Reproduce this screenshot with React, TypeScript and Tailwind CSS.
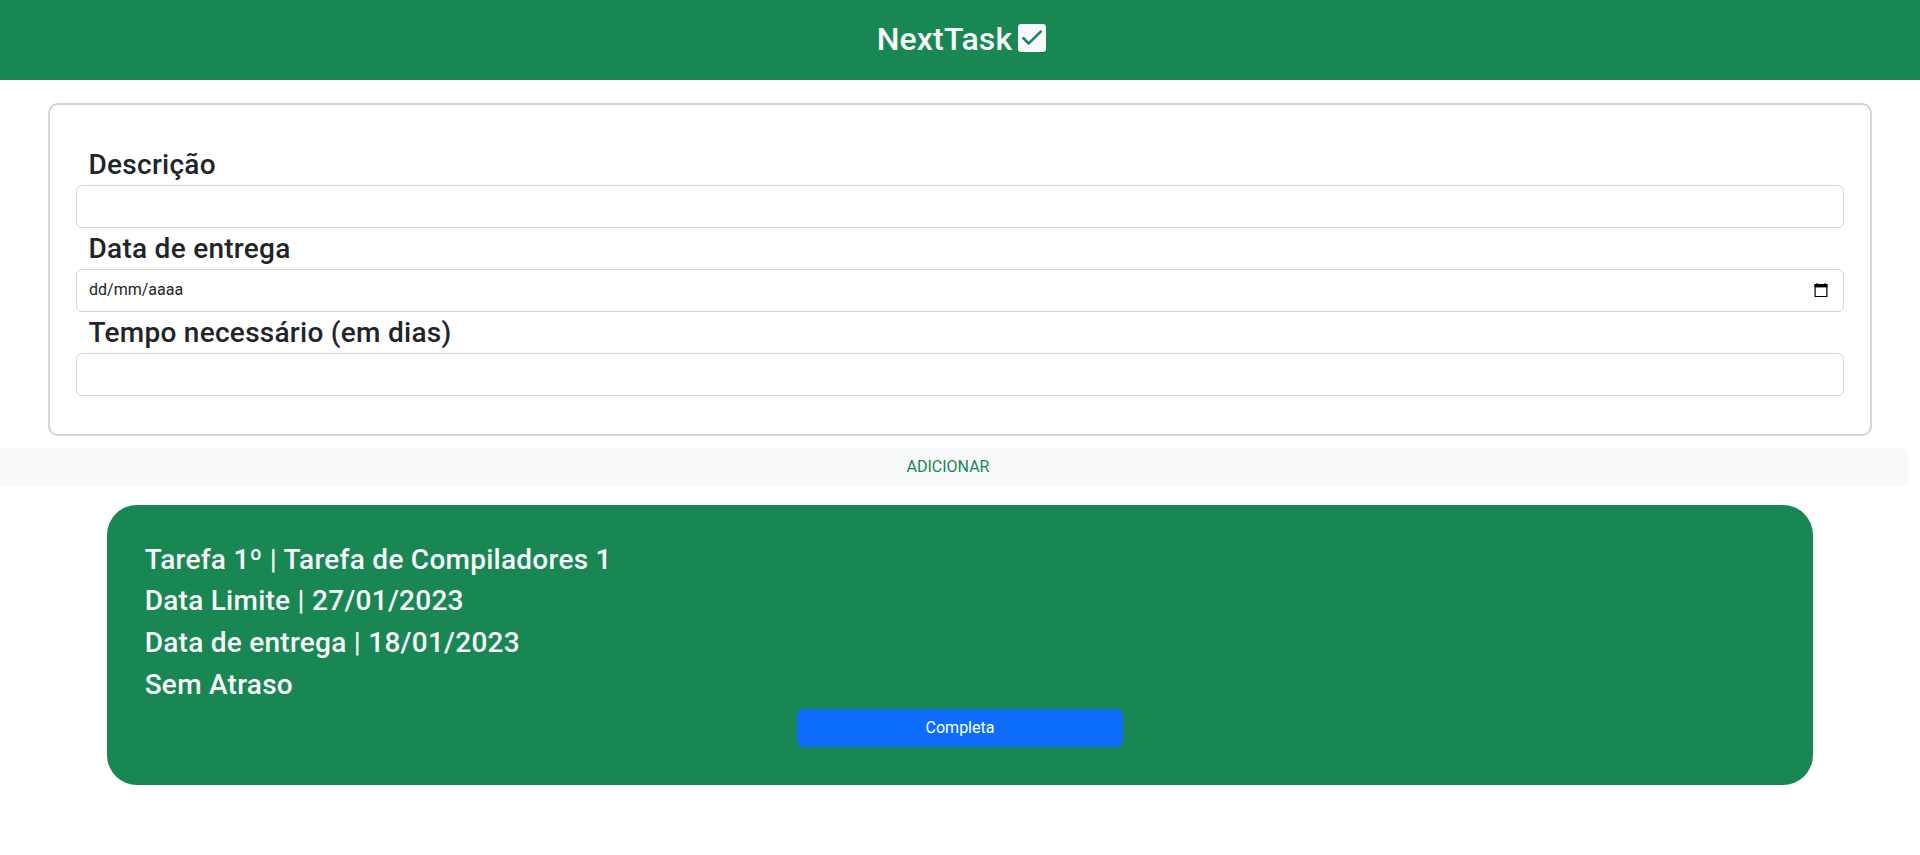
import React from "react";

type FieldProps = { label: string; children?: React.ReactNode };

function Field({ label, children }: FieldProps) {
  return (
    <div className="flex flex-col">
      <label className="flex h-[41px] items-center pl-[12.5px] text-[28px] font-medium leading-[34px] tracking-[0.27px] text-[#212529]">
        {label}
      </label>
      <div className="flex h-[43px] items-center justify-between rounded-md border border-[#ced4da] bg-white px-3 text-base text-[#212529]">
        {children}
      </div>
    </div>
  );
}

function CalendarIcon() {
  return (
    <svg className="mr-[3px] h-[15px] w-[14px]" viewBox="0 0 14 15" fill="none">
      <path d="M3 0.2v2M11 0.2v2" stroke="#000" strokeWidth="1.3" />
      <path d="M1.1 1.6h11.8v11.9H1.1z" stroke="#000" strokeWidth="1.2" strokeLinejoin="round" />
      <path d="M0.6 1h12.8v3.4H0.6z" fill="#000" />
    </svg>
  );
}

function CheckedBox() {
  return (
    <svg className="h-7 w-7" viewBox="0 0 28 28">
      <rect width="28" height="28" rx="3.2" fill="#f8f9fa" />
      <path d="M4.7 13.5l6 6L23.5 6.8" fill="none" stroke="#198754" strokeWidth="2.5" />
    </svg>
  );
}

const taskLines = [
  "Tarefa 1º | Tarefa de Compiladores 1",
  "Data Limite | 27/01/2023",
  "Data de entrega | 18/01/2023",
  "Sem Atraso",
];

export default function App() {
  return (
    <div className="h-[855px] overflow-hidden bg-white font-['Roboto',sans-serif]">
      <header className="flex h-20 items-center justify-center gap-[6px] bg-[#198754] pb-1 pl-[3px]">
        <h1 className="pt-px text-[32px] font-medium leading-10 tracking-[0.15px] text-[#f8f9fa]">NextTask</h1>
        <CheckedBox />
      </header>

      <form className="mx-12 mt-[23px] h-[333px] rounded-[10px] border-2 border-[#d3d3d3] px-[26px] pt-[39px]">
        <Field label="Descrição" />
        <Field label="Data de entrega">
          <span className="pb-[2px]">dd/mm/aaaa</span>
          <CalendarIcon />
        </Field>
        <Field label="Tempo necessário (em dias)" />
      </form>

      <button
        type="button"
        className="-ml-3 mt-3 block h-[38px] w-[1920px] rounded-md bg-[#f8f9fa] text-base text-[#198754]"
      >
        ADICIONAR
      </button>

      <section className="mx-[106.67px] mt-[19px] flex h-[280px] flex-col rounded-[30px] bg-[#198754] px-[38px] pt-[37.6px]">
        {taskLines.map((line) => (
          <p key={line} className="h-[41.8px] text-[28px] font-medium leading-[34px] tracking-[0.26px] text-[#f8f9fa]">
            {line}
          </p>
        ))}
        <button
          type="button"
          className="-mt-[0.8px] h-[38px] w-[326px] self-center rounded-md bg-[#0d6efd] text-base text-white"
        >
          Completa
        </button>
      </section>
    </div>
  );
}
